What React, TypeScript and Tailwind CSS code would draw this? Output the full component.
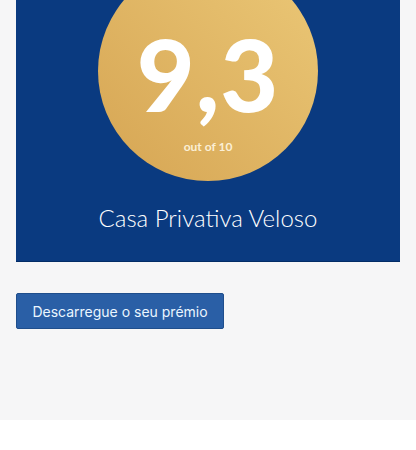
import React from "react";

export default function App() {
  return (
    <div className="w-[416px] h-[450px] bg-white" style={{ fontFamily: "Lato, 'Open Sans', sans-serif" }}>
      <section className="bg-[#f6f6f7] h-[420px] px-4">
        <div className="h-[262px] bg-[#0a3a80] border-b border-[#032c66] overflow-hidden flex flex-col items-center">
          <div className="-mt-[39px] w-[220px] h-[220px] shrink-0 rounded-full bg-gradient-to-bl from-[#ebc877] to-[#d6a553] flex flex-col items-center text-white">
            <span className="mt-[62px] text-[100px] leading-none font-black tracking-[1px]">9,3</span>
            <span className="mt-[16px] text-[12px] leading-[16px] font-bold text-[#fbefd6]">out of 10</span>
          </div>
          <p className="mt-[23px] text-[24px] leading-[28px] text-white font-light">Casa Privativa Veloso</p>
        </div>
        <button
          className="mt-[31px] w-[208px] h-[36px] rounded-[2px] bg-[#2a5fa6] border border-[#1f4e8c] text-[14px] text-[#eaf6ff]"
          style={{ fontFamily: "Inter, sans-serif" }}
        >
          Descarregue o seu prémio
        </button>
      </section>
    </div>
  );
}
